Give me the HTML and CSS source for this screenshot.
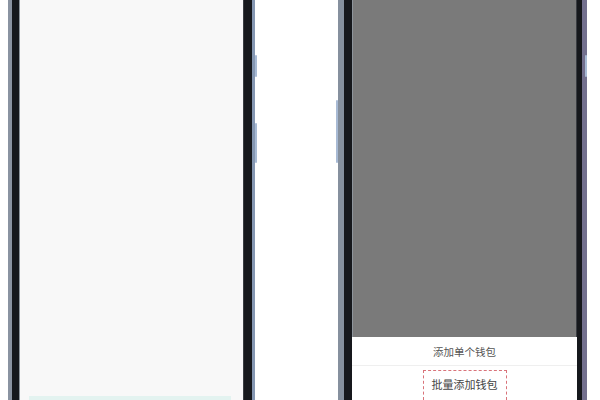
FILE: index.html
```html
<!DOCTYPE html>
<html lang="zh">
<head>
<meta charset="utf-8">
<link rel="stylesheet" href="styles.css">
</head>
<body>
<div class="stage">
  <div class="phone phone-left">
    <span class="btn btn-r btn-r1"></span>
    <span class="btn btn-r btn-r2"></span>
    <div class="screen screen-light">
      <div class="bar-hint"></div>
    </div>
  </div>
  <div class="phone phone-right">
    <span class="btn btn-l"></span>
    <span class="btn btn-r btn-r1"></span>
    <div class="screen screen-dim">
      <div class="overlay"></div>
      <div class="sheet">
        <div class="sheet-item">添加单个钱包</div>
        <div class="sheet-item sheet-item-second">
          <span class="dashed">批量添加钱包</span>
        </div>
      </div>
    </div>
  </div>
</div>
</body>
</html>
```
FILE: styles.css
```css
html, body {
  margin: 0;
  padding: 0;
  background: #ffffff;
}
.stage {
  display: flex;
  width: 600px;
  height: 400px;
  overflow: hidden;
  font-family: "Noto Sans CJK SC", "Noto Sans", sans-serif;
}
.phone {
  position: relative;
  box-sizing: border-box;
  height: 400px;
  display: flex;
  background: #16181c;
}
.phone-left {
  margin-left: 8px;
  width: 247px;
  border-left: 4px solid #8a93a1;
  border-right: 3px solid #8597b2;
  padding: 0 8px 0 7px;
}
.phone-right {
  margin-left: 83px;
  width: 249px;
  border-left: 6px solid #86909e;
  border-right: 5px solid #73708e;
  padding: 0 5px 0 8px;
}
.btn {
  position: absolute;
  width: 2px;
  background: #a8bad4;
  border-radius: 1px;
}
.btn-r { right: -5px; }
.btn-l { left: -8px; top: 100px; height: 63px; }
.btn-r1 { top: 55px; height: 22px; }
.btn-r2 { top: 123px; height: 40px; }
.screen {
  flex: 1;
  display: flex;
  flex-direction: column;
  box-shadow: inset 1px 0 0 #8e959c, inset -1px 0 0 #3a3d42;
}
.screen-light {
  background: #f8f8f8;
  justify-content: flex-end;
}
.bar-hint {
  height: 4px;
  margin: 0 13px 0 10px;
  background: #e3f3f0;
}
.screen-dim {
  background: #7a7a7a;
}
.overlay {
  flex: 1;
}
.sheet {
  height: 63px;
  background: #ffffff;
  display: flex;
  flex-direction: column;
}
.sheet-item {
  height: 35px;
  box-sizing: border-box;
  display: flex;
  align-items: center;
  justify-content: center;
  font-size: 10.5px;
  color: #555555;
  border-bottom: 1px solid #efefef;
}
.sheet-item-second {
  flex: 1;
  border-bottom: none;
  align-items: flex-start;
  padding-top: 4px;
}
.dashed {
  display: block;
  width: 84px;
  height: 30px;
  box-sizing: border-box;
  border: 1px dashed #d9737a;
  border-bottom: none;
  text-align: center;
  line-height: 22px;
  padding-top: 2px;
  font-size: 11px;
  color: #444444;
}
```
